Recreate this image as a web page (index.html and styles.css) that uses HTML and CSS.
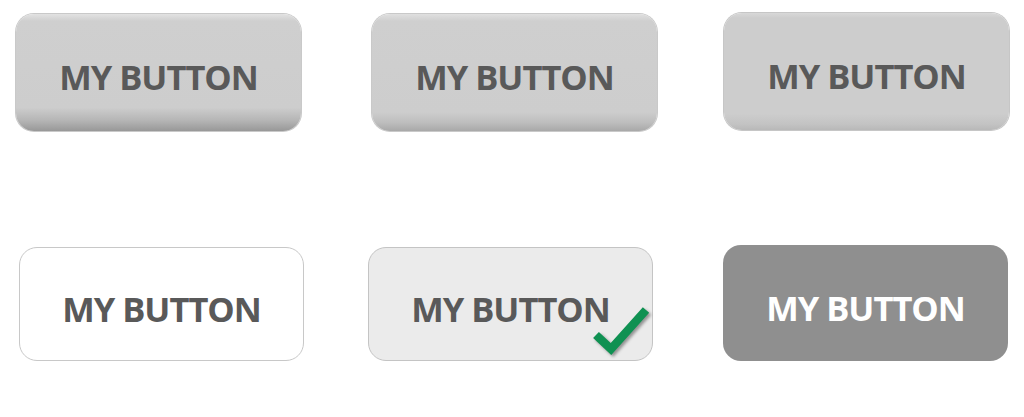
FILE: index.html
```html
<!DOCTYPE html>
<html lang="en">
<head>
<meta charset="utf-8">
<title>Buttons</title>
<link rel="stylesheet" href="styles.css">
</head>
<body>
<main class="board">
  <div class="btn btn-bevel">MY BUTTON</div>
  <div class="btn btn-soft">MY BUTTON</div>
  <div class="btn btn-flat">MY BUTTON</div>
  <div class="btn btn-outline">MY BUTTON</div>
  <div class="btn btn-checked">MY BUTTON
    <svg class="check" width="64" height="56" viewBox="0 0 64 56" aria-hidden="true">
      <path class="check-shadow" d="M8 33 L23 47 L58 8" />
      <path class="check-mark" d="M6 31 L21 45 L56 6" />
    </svg>
  </div>
  <div class="btn btn-dark">MY BUTTON</div>
</main>
</body>
</html>
```

FILE: styles.css
```css
html, body {
  margin: 0;
  padding: 0;
  background: #ffffff;
}

.board {
  display: grid;
  grid-template-columns: 356px 352px 285px;
  grid-template-rows: 117px 115px;
  row-gap: 116px;
  padding: 14px 0 0 16px;
}

.btn {
  position: relative;
  box-sizing: border-box;
  width: 285px;
  display: flex;
  align-items: center;
  justify-content: center;
  padding-top: 8px;
  border-radius: 18px;
  font-family: "Open Sans", "Liberation Sans", sans-serif;
  font-weight: 700;
  font-size: 34.5px;
  letter-spacing: -1px;
  color: #595959;
}

.btn-bevel {
  height: 117px;
  background: linear-gradient(to bottom, #e2e2e2 0px, #cfcfcf 7px, #cdcdcd 80%, #b5b5b5 91%, #989898 100%);
  box-shadow: 0 0 0 1px #c9c9c9;
}

.btn-soft {
  height: 117px;
  background: linear-gradient(to bottom, #e0e0e0 0px, #cfcfcf 7px, #cdcdcd 84%, #bdbdbd 93%, #a8a8a8 100%);
  box-shadow: 0 0 0 1px #c9c9c9;
}

.btn-flat {
  height: 117px;
  margin-top: -1px;
  background: linear-gradient(to bottom, #d8d8d8 0px, #cdcdcd 5px, #cdcdcd 86%, #c3c3c3 95%, #b8b8b8 100%);
  box-shadow: 0 0 0 1px #c6c6c6;
}

.btn-outline {
  height: 114px;
  margin-left: 3px;
  background: #ffffff;
  border: 1px solid #c8c8c8;
}

.btn-checked {
  height: 114px;
  margin-left: -4px;
  background: #ebebeb;
  border: 1px solid #c4c4c4;
}

.btn-dark {
  height: 116px;
  margin-top: -2px;
  margin-left: -1px;
  background: #8f8f8f;
  color: #ffffff;
}

.check {
  position: absolute;
  left: 221px;
  top: 56px;
  overflow: visible;
}

.check path {
  fill: none;
  stroke-width: 8.5;
  stroke-linecap: butt;
  stroke-linejoin: miter;
}

.check-shadow {
  stroke: rgba(40, 40, 40, 0.45);
  filter: blur(1.5px);
}

.check-mark {
  stroke: #0f9152;
}
```
